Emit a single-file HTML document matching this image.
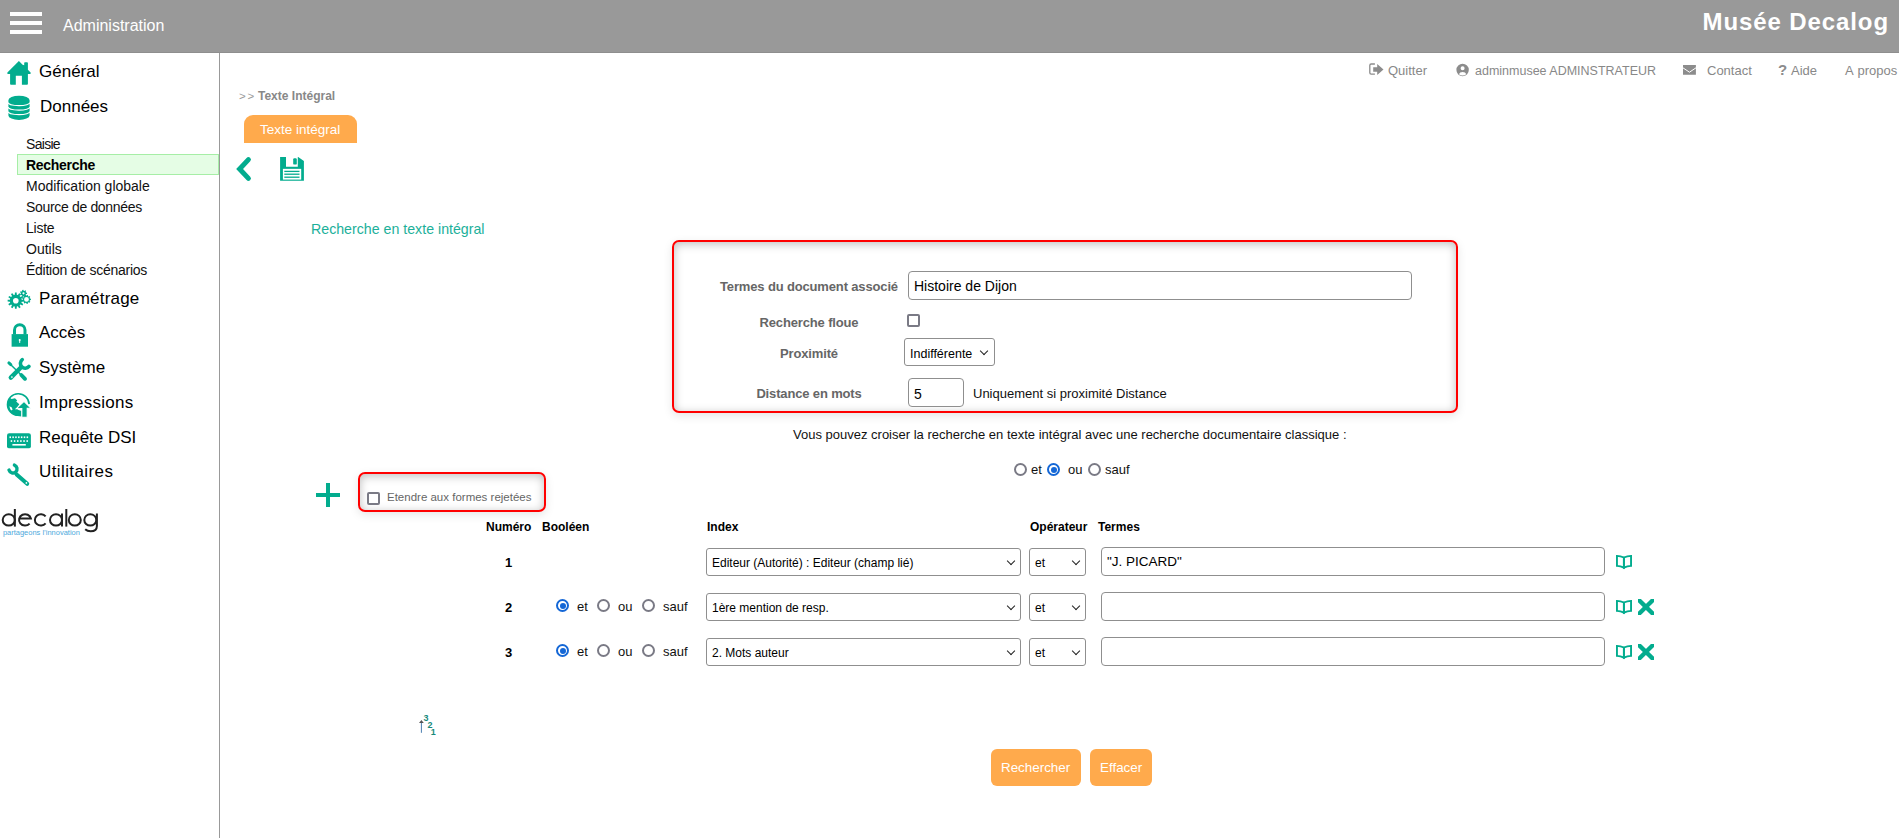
<!DOCTYPE html>
<html><head><meta charset="utf-8">
<style>
*{box-sizing:border-box}
html,body{margin:0;padding:0;width:1899px;height:838px;overflow:hidden;background:#fff;font-family:"Liberation Sans",sans-serif}
.a{position:absolute}
.t{position:absolute;white-space:nowrap;line-height:20px;height:20px}
#hdr{left:0;top:0;width:1899px;height:53px;background:#999;border-bottom:1px solid #8e8e8e}
.bar{position:absolute;left:10px;width:32px;height:4px;background:#fff}
#side{left:0;top:53px;width:220px;height:785px;border-right:1px solid #999}
.mi{color:#000;font-size:17px}
.si{color:#111;font-size:14px;left:26px}
.teal{fill:#02ac8e}
.lnk{color:#888;font-size:13px}
.lbl{color:#666;font-size:13px;font-weight:bold;letter-spacing:-0.15px}
.inp{position:absolute;border:1px solid #8f8f8f;border-radius:4px;background:#fff}
.sel{position:absolute;border:1px solid #8f8f8f;border-radius:3px;background:#fff}
.chev{position:absolute;width:6px;height:6px;border-right:1.5px solid #222;border-bottom:1.5px solid #222;transform:rotate(45deg)}
.rad{position:absolute;width:13px;height:13px;border:2px solid #7a7a85;border-radius:50%;background:#fff}
.rad.on{border:2px solid #1467d6}
.rad.on::after{content:"";position:absolute;left:1.5px;top:1.5px;width:6px;height:6px;border-radius:50%;background:#1467d6}
.cb{position:absolute;width:13px;height:13px;border:2px solid #7a7a85;border-radius:2px;background:#fff}
.txt{color:#111;font-size:13px}
.th{color:#000;font-size:12px;font-weight:bold}
.num{color:#000;font-size:13px;font-weight:bold}
.btn{position:absolute;height:37px;top:749px;background:#ffaa4c;border-radius:6px;color:#fff;font-size:13.4px}
</style></head><body>

<!-- header -->
<div id="hdr" class="a">
  <div class="bar" style="top:12px"></div>
  <div class="bar" style="top:21px"></div>
  <div class="bar" style="top:30px"></div>
</div>
<div class="t" style="left:63px;top:16px;color:#fff;font-size:16px">Administration</div>
<div class="t" style="right:10px;top:9px;color:#fff;font-size:24px;font-weight:bold;letter-spacing:0.9px;height:26px;line-height:26px">Musée Decalog</div>

<!-- sidebar -->
<div id="side" class="a"></div>
<div class="a" style="left:17px;top:154px;width:202px;height:21px;background:#e5fde5;border:1px solid #a6eea6"></div>

<div class="t mi" style="left:39px;top:62px">Général</div>
<div class="t mi" style="left:40px;top:97px">Données</div>
<div class="t si" style="top:134px;letter-spacing:-0.7px">Saisie</div>
<div class="t si" style="top:155px;font-weight:bold;color:#000;letter-spacing:-0.3px">Recherche</div>
<div class="t si" style="top:176px">Modification globale</div>
<div class="t si" style="top:197px;letter-spacing:-0.33px">Source de données</div>
<div class="t si" style="top:218px;letter-spacing:-0.25px">Liste</div>
<div class="t si" style="top:239px">Outils</div>
<div class="t si" style="top:260px;letter-spacing:-0.25px">Édition de scénarios</div>
<div class="t mi" style="left:39px;top:288.5px;letter-spacing:0.2px">Paramétrage</div>
<div class="t mi" style="left:39px;top:323px">Accès</div>
<div class="t mi" style="left:39px;top:357.5px">Système</div>
<div class="t mi" style="left:39px;top:392.5px;letter-spacing:0.25px">Impressions</div>
<div class="t mi" style="left:39px;top:427.5px">Requête DSI</div>
<div class="t mi" style="left:39px;top:462px;letter-spacing:0.4px">Utilitaires</div>

<!-- top links -->
<div class="t lnk" style="left:1388px;top:61px">Quitter</div>
<div class="t lnk" style="left:1475px;top:61px;font-size:12.5px">adminmusee ADMINSTRATEUR</div>
<div class="t lnk" style="left:1707px;top:61px">Contact</div>
<div class="t lnk" style="left:1791px;top:61px">Aide</div>
<div class="t lnk" style="left:1845px;top:61px;word-spacing:1px">A propos</div>

<!-- breadcrumb / tab -->
<div class="t" style="left:239px;top:86px;color:#999;font-size:11.5px;letter-spacing:1.8px">&gt;&gt;</div>
<div class="t" style="left:258px;top:86px;color:#888;font-size:12px;font-weight:bold">Texte Intégral</div>
<div class="a" style="left:244px;top:115px;width:113px;height:28px;background:#ffaa4c;border-radius:9px 9px 0 0"></div>
<div class="t" style="left:260px;top:120px;color:#fff;font-size:13.5px">Texte intégral</div>

<div class="t" style="left:311px;top:219px;color:#1cb09a;font-size:14.2px">Recherche en texte intégral</div>

<!-- red box -->
<div class="a" style="left:672px;top:240px;width:786px;height:172.5px;border:2px solid #f00;border-radius:7px;box-shadow:inset 0 2px 10px rgba(0,0,0,.26),0 3px 10px rgba(0,0,0,.1)"></div>
<div class="t lbl" style="left:709px;width:200px;text-align:center;top:277px">Termes du document associé</div>
<div class="t lbl" style="left:709px;width:200px;text-align:center;top:313px">Recherche floue</div>
<div class="t lbl" style="left:709px;width:200px;text-align:center;top:344px">Proximité</div>
<div class="t lbl" style="left:709px;width:200px;text-align:center;top:384px">Distance en mots</div>
<div class="inp" style="left:908px;top:271px;width:504px;height:29px"></div>
<div class="t" style="left:914px;top:276px;color:#000;font-size:14px">Histoire de Dijon</div>
<div class="cb" style="left:907px;top:314px"></div>
<div class="sel" style="left:904px;top:338px;width:91px;height:28px"></div>
<div class="t" style="left:910px;top:344px;color:#000;font-size:12.5px">Indifférente</div>
<div class="chev" style="left:981px;top:348px"></div>
<div class="inp" style="left:908px;top:378px;width:56px;height:29px"></div>
<div class="t" style="left:914px;top:384px;color:#000;font-size:14px">5</div>
<div class="t txt" style="left:973px;top:384px">Uniquement si proximité Distance</div>

<div class="t txt" style="left:793px;top:425px">Vous pouvez croiser la recherche en texte intégral avec une recherche documentaire classique :</div>
<div class="rad" style="left:1014px;top:463px"></div>
<div class="t txt" style="left:1031px;top:460px">et</div>
<div class="rad on" style="left:1047px;top:463px"></div>
<div class="t txt" style="left:1068px;top:460px">ou</div>
<div class="rad" style="left:1088px;top:463px"></div>
<div class="t txt" style="left:1105px;top:460px">sauf</div>

<!-- plus + small red box -->
<div class="a" style="left:316px;top:493px;width:24px;height:4px;background:#02ac8e"></div>
<div class="a" style="left:326px;top:483px;width:4px;height:24px;background:#02ac8e"></div>
<div class="a" style="left:358px;top:472px;width:188px;height:40px;border:2px solid #f00;border-radius:7px;box-shadow:inset 0 2px 10px rgba(0,0,0,.26),0 3px 10px rgba(0,0,0,.1)"></div>
<div class="cb" style="left:367px;top:491.5px"></div>
<div class="t" style="left:387px;top:487px;color:#666;font-size:11.5px">Etendre aux formes rejetées</div>

<!-- table -->
<div class="t th" style="left:486px;top:517px">Numéro</div>
<div class="t th" style="left:542px;top:517px">Booléen</div>
<div class="t th" style="left:707px;top:517px">Index</div>
<div class="t th" style="left:1030px;top:517px">Opérateur</div>
<div class="t th" style="left:1098px;top:517px">Termes</div>

<div class="t num" style="left:505px;top:553px">1</div>
<div class="t num" style="left:505px;top:598px">2</div>
<div class="t num" style="left:505px;top:643px">3</div>

<div class="rad on" style="left:556px;top:599px"></div>
<div class="t txt" style="left:577px;top:597px">et</div>
<div class="rad" style="left:597px;top:599px"></div>
<div class="t txt" style="left:618px;top:597px">ou</div>
<div class="rad" style="left:642px;top:599px"></div>
<div class="t txt" style="left:663px;top:597px">sauf</div>
<div class="rad on" style="left:556px;top:644px"></div>
<div class="t txt" style="left:577px;top:642px">et</div>
<div class="rad" style="left:597px;top:644px"></div>
<div class="t txt" style="left:618px;top:642px">ou</div>
<div class="rad" style="left:642px;top:644px"></div>
<div class="t txt" style="left:663px;top:642px">sauf</div>

<div class="sel" style="left:706px;top:548px;width:315px;height:28px"></div>
<div class="t" style="left:712px;top:553px;color:#000;font-size:12px">Editeur (Autorité) : Editeur (champ lié)</div>
<div class="chev" style="left:1008px;top:558px"></div>
<div class="sel" style="left:706px;top:593px;width:315px;height:28px"></div>
<div class="t" style="left:712px;top:598px;color:#000;font-size:12px">1ère mention de resp.</div>
<div class="chev" style="left:1008px;top:603px"></div>
<div class="sel" style="left:706px;top:638px;width:315px;height:28px"></div>
<div class="t" style="left:712px;top:643px;color:#000;font-size:12px">2. Mots auteur</div>
<div class="chev" style="left:1008px;top:648px"></div>

<div class="sel" style="left:1029px;top:548px;width:57px;height:28px"></div>
<div class="t" style="left:1035px;top:553px;color:#000;font-size:12px">et</div>
<div class="chev" style="left:1073px;top:558px"></div>
<div class="sel" style="left:1029px;top:593px;width:57px;height:28px"></div>
<div class="t" style="left:1035px;top:598px;color:#000;font-size:12px">et</div>
<div class="chev" style="left:1073px;top:603px"></div>
<div class="sel" style="left:1029px;top:638px;width:57px;height:28px"></div>
<div class="t" style="left:1035px;top:643px;color:#000;font-size:12px">et</div>
<div class="chev" style="left:1073px;top:648px"></div>

<div class="inp" style="left:1101px;top:547px;width:504px;height:29px"></div>
<div class="t" style="left:1107px;top:552px;color:#000;font-size:13.5px">"J. PICARD"</div>
<div class="inp" style="left:1101px;top:592px;width:504px;height:29px"></div>
<div class="inp" style="left:1101px;top:637px;width:504px;height:29px"></div>

<!-- buttons -->
<div class="btn" style="left:991px;width:90px"><div class="t" style="left:10px;top:9px">Rechercher</div></div>
<div class="btn" style="left:1090px;width:62px"><div class="t" style="left:10px;top:9px">Effacer</div></div>


<!-- sidebar icons -->
<svg class="a" style="left:4px;top:58px" width="32" height="32" viewBox="0 0 32 32"><path fill="#02ac8e" d="M14.9 3.1 L3.4 14.4 Q2.7 15.6 4 16.1 L6.1 16.1 L6.1 26 Q6.1 26.8 7 26.8 L11.8 26.8 L11.8 17.8 L17.9 17.8 L17.9 26.8 L23 26.8 Q23.9 26.8 23.9 26 L23.9 16.1 L26 16.1 Q27.3 15.6 26.6 14.4 L23.9 11.7 L23.9 5.1 Q23.9 4.3 23 4.3 L21 4.3 Q20.2 4.3 20.2 5.1 L20.2 7.2 L18.6 6.7 Z"/></svg>
<svg class="a" style="left:4px;top:92px" width="32" height="32" viewBox="0 0 32 32"><path fill="#02ac8e" d="M4.4 8.2 A10.6 4.4 0 0 1 25.6 8.2 L25.6 23.5 A10.6 4.4 0 0 1 4.4 23.5 Z"/><g fill="none" stroke="#fff" stroke-width="1.1"><path d="M4 10.6 A11 3 0 0 0 26 10.6"/><path d="M4 15.1 A11 3 0 0 0 26 15.1"/><path d="M4 19.6 A11 3 0 0 0 26 19.6"/></g></svg>
<svg class="a" style="left:4px;top:286px" width="32" height="32" viewBox="0 0 32 32"><g fill="#02ac8e" fill-rule="evenodd"><path d="M19.96 13.84 L19.96 15.56 L17.72 15.70 L17.42 16.79 L19.29 18.04 L18.43 19.52 L16.42 18.52 L15.62 19.32 L16.62 21.33 L15.14 22.19 L13.89 20.32 L12.80 20.62 L12.66 22.86 L10.94 22.86 L10.80 20.62 L9.71 20.32 L8.46 22.19 L6.98 21.33 L7.98 19.32 L7.18 18.52 L5.17 19.52 L4.31 18.04 L6.18 16.79 L5.88 15.70 L3.64 15.56 L3.64 13.84 L5.88 13.70 L6.18 12.61 L4.31 11.36 L5.17 9.88 L7.18 10.88 L7.98 10.08 L6.98 8.07 L8.46 7.21 L9.71 9.08 L10.80 8.78 L10.94 6.54 L12.66 6.54 L12.80 8.78 L13.89 9.08 L15.14 7.21 L16.62 8.07 L15.62 10.08 L16.42 10.88 L18.43 9.88 L19.29 11.36 L17.42 12.61 L17.72 13.70 Z M9.00 14.70 a2.80 2.80 0 1 0 5.60 0 a2.80 2.80 0 1 0 -5.60 0 Z"/><path d="M26.96 12.77 L26.96 14.03 L25.91 14.18 L25.61 15.00 L26.32 15.78 L25.51 16.74 L24.62 16.19 L23.86 16.63 L23.89 17.68 L22.66 17.90 L22.33 16.90 L21.47 16.74 L20.81 17.57 L19.73 16.95 L20.12 15.97 L19.56 15.30 L18.53 15.51 L18.10 14.34 L19.03 13.84 L19.03 12.96 L18.10 12.46 L18.53 11.29 L19.56 11.50 L20.12 10.83 L19.73 9.85 L20.81 9.23 L21.47 10.06 L22.33 9.90 L22.66 8.90 L23.89 9.12 L23.86 10.17 L24.62 10.61 L25.51 10.06 L26.32 11.02 L25.61 11.80 L25.91 12.62 Z M20.10 13.40 a2.40 2.40 0 1 0 4.80 0 a2.40 2.40 0 1 0 -4.80 0 Z"/><path d="M23.04 6.66 L23.04 7.94 L21.99 8.04 L21.63 8.79 L22.21 9.67 L21.21 10.47 L20.48 9.71 L19.66 9.89 L19.34 10.90 L18.09 10.61 L18.23 9.57 L17.57 9.05 L16.59 9.42 L16.03 8.26 L16.93 7.72 L16.93 6.88 L16.03 6.34 L16.59 5.18 L17.57 5.55 L18.23 5.03 L18.09 3.99 L19.34 3.70 L19.66 4.71 L20.48 4.89 L21.21 4.13 L22.21 4.93 L21.63 5.81 L21.99 6.56 Z M18.40 7.30 a1.10 1.10 0 1 0 2.20 0 a1.10 1.10 0 1 0 -2.20 0 Z"/></g></svg>
<svg class="a" style="left:4px;top:319px" width="32" height="32" viewBox="0 0 32 32"><path d="M10.5 15.5 L10.5 11 A5.25 5.25 0 0 1 21 11 L21 15.5" fill="none" stroke="#02ac8e" stroke-width="3"/><rect x="7.6" y="15.1" width="16.4" height="12.6" fill="#02ac8e"/><circle cx="15.7" cy="20.9" r="1" fill="#fff"/><rect x="15.2" y="20.9" width="1" height="3" fill="#fff"/></svg>
<svg class="a" style="left:4px;top:354px" width="32" height="32" viewBox="0 0 32 32"><g stroke="#02ac8e" stroke-linecap="round" fill="none"><line x1="4.9" y1="8.9" x2="6.8" y2="10.6" stroke-width="3"/><line x1="5.5" y1="9.5" x2="16" y2="19.8" stroke-width="1.5"/><line x1="17.3" y1="21" x2="21" y2="24.8" stroke-width="3.9"/><line x1="6.8" y1="23.6" x2="16.6" y2="13.8" stroke-width="4.4"/><path d="M24.98 12.36 A4.8 4.8 0 1 1 18.25 5.62" stroke-width="3.6"/></g><circle cx="7.9" cy="23" r="0.85" fill="#fff"/></svg>
<svg class="a" style="left:4px;top:389px" width="32" height="32" viewBox="0 0 32 32"><path d="M25.1 15.1 A10.8 10.8 0 1 0 14.3 26.3" fill="none" stroke="#02ac8e" stroke-width="1.6"/><path fill="#02ac8e" d="M3.5 15 Q3.8 11 6 9 L7.6 10.1 L11 9.2 L13.2 11.5 L12.2 12.6 L15.3 15.3 L12.6 19.5 L14.5 21 L17.5 22 L17.5 27.5 Q9 27.5 5 21 Q3.3 18 3.5 15 Z"/><path fill="#fff" d="M5.4 17.2 L7.6 18.2 L8.6 20.4 L7.2 21.6 Q5.8 19.5 5.4 17.2 Z"/><path fill="#02ac8e" stroke="#fff" stroke-width="1.1" d="M20 12.4 L27.2 19.3 L23.2 19.3 L23.2 28.2 L17.8 28.2 L17.8 19.5 L12.3 19.7 Z"/></svg>
<svg class="a" style="left:4px;top:424px" width="32" height="32" viewBox="0 0 32 32"><rect x="3" y="9.35" width="23.9" height="15" rx="2.2" fill="#02ac8e"/><g fill="#fff"><rect x="5.5" y="12.4" width="1.5" height="1.7"/><rect x="8.35" y="12.4" width="1.5" height="1.7"/><rect x="11.2" y="12.4" width="1.5" height="1.7"/><rect x="14.05" y="12.4" width="1.5" height="1.7"/><rect x="16.9" y="12.4" width="1.5" height="1.7"/><rect x="19.75" y="12.4" width="1.5" height="1.7"/><rect x="22.6" y="12.4" width="1.5" height="1.7"/><rect x="6.7" y="16.2" width="1.5" height="1.7"/><rect x="9.85" y="16.2" width="1.5" height="1.7"/><rect x="13" y="16.2" width="1.5" height="1.7"/><rect x="16.15" y="16.2" width="1.5" height="1.7"/><rect x="19.3" y="16.2" width="1.5" height="1.7"/><rect x="22.45" y="16.2" width="1.5" height="1.7"/><rect x="8.4" y="20" width="13.4" height="1.6"/></g></svg>
<svg class="a" style="left:4px;top:459px" width="32" height="32" viewBox="0 0 32 32"><g stroke="#02ac8e" stroke-linecap="round" fill="none"><line x1="12.6" y1="15.4" x2="23.2" y2="24.8" stroke-width="4"/><path d="M10.4 6.1 A4.1 4.1 0 1 1 5 11.1" stroke-width="3.4"/></g><circle cx="22.4" cy="23.9" r="0.85" fill="#fff"/></svg>

<!-- decalog logo -->
<svg class="a" style="left:0;top:500px" width="110" height="40" viewBox="0 0 110 40"><g fill="none" stroke="#222" stroke-width="2"><ellipse cx="8.75" cy="19.9" rx="6.05" ry="5.7"/><line x1="14.85" y1="9" x2="14.85" y2="26.6"/><path d="M19 18.6 H30.9 A6 5.7 0 1 0 29.6 23.6"/><path d="M45.6 16.4 A6 5.7 0 1 0 45.6 23.4"/><ellipse cx="56" cy="19.9" rx="6" ry="5.7"/><line x1="62" y1="13.6" x2="62" y2="26.6"/><line x1="66.3" y1="9" x2="66.3" y2="26.6"/><ellipse cx="74.8" cy="19.9" rx="6" ry="5.7"/><ellipse cx="90.3" cy="19.9" rx="6" ry="5.7"/><path d="M96.9 13.6 V26 Q96.9 31.3 90.6 31.3 Q87.3 31.3 85.2 29.3"/></g><text x="2.9" y="35.2" font-family="Liberation Sans" font-size="7" fill="#4ea9dc" textLength="77" lengthAdjust="spacingAndGlyphs">partageons l’innovation</text></svg>

<!-- top link icons -->
<svg class="a" style="left:1364px;top:58px" width="28" height="24" viewBox="0 0 28 24"><path d="M10.9 6 H7.2 Q5.8 6 5.8 7.4 V14.8 Q5.8 16.2 7.2 16.2 H10.9" fill="none" stroke="#8c8c8c" stroke-width="1.3"/><path fill="#8c8c8c" d="M9.2 9.2 H13.2 V5.9 L19.5 11.4 L13.2 16.9 V13.7 H9.2 Z"/></svg>
<svg class="a" style="left:1450px;top:58px" width="28" height="24" viewBox="0 0 28 24"><path fill="#8c8c8c" fill-rule="evenodd" d="M6.4 12 A6.2 6.2 0 1 0 18.8 12 A6.2 6.2 0 1 0 6.4 12 Z M10.6 10.3 A2 2 0 1 0 14.6 10.3 A2 2 0 1 0 10.6 10.3 Z M8.9 16.2 Q12.6 18.6 16.3 16.2 Q15.5 14 12.6 14 Q9.7 14 8.9 16.2 Z"/></svg>
<svg class="a" style="left:1678px;top:58px" width="28" height="24" viewBox="0 0 28 24"><rect x="5" y="7" width="12.9" height="9.75" fill="#8c8c8c"/><path d="M4.6 9.6 L11.45 14.2 L18.3 9.6" fill="none" stroke="#fff" stroke-width="1"/></svg>
<div class="t" style="left:1778px;top:60px;color:#8c8c8c;font-size:15px;font-weight:bold">?</div>

<!-- back + save -->
<svg class="a" style="left:230px;top:152px" width="80" height="34" viewBox="0 0 80 34"><polyline points="18.4,7.6 9.6,17 18.4,26.4" fill="none" stroke="#02ac8e" stroke-width="5" stroke-linecap="round" stroke-linejoin="miter"/><path fill="#02ac8e" d="M50.1 5 H56 V14.7 H67.8 V5 H68.2 L73.9 9.1 V28.85 H50.1 Z"/><rect x="63.2" y="6.3" width="3.6" height="6.3" rx="1.2" fill="#02ac8e"/><rect x="52.9" y="16.85" width="18.3" height="10.75" fill="#fff"/><g stroke="#02ac8e" stroke-width="1.3"><line x1="54.3" y1="19.4" x2="69.5" y2="19.4"/><line x1="54.3" y1="22.2" x2="69.5" y2="22.2"/><line x1="54.3" y1="25.2" x2="69.5" y2="25.2"/></g></svg>

<!-- book + x icons -->
<svg class="a" style="left:1610px;top:549px" width="50" height="26" viewBox="0 0 50 26"><g fill="none" stroke="#02ac8e" stroke-width="1.9"><path d="M6.95 6.85 Q10.5 6.85 13.9 8.5 L13.9 18.7 Q10.5 16.9 6.95 16.9 Z"/><path d="M21.05 6.85 Q17.3 6.85 13.9 8.5 L13.9 18.7 Q17.3 16.9 21.05 16.9 Z"/></g></svg>
<svg class="a" style="left:1610px;top:594px" width="50" height="26" viewBox="0 0 50 26"><g fill="none" stroke="#02ac8e" stroke-width="1.9"><path d="M6.95 6.85 Q10.5 6.85 13.9 8.5 L13.9 18.7 Q10.5 16.9 6.95 16.9 Z"/><path d="M21.05 6.85 Q17.3 6.85 13.9 8.5 L13.9 18.7 Q17.3 16.9 21.05 16.9 Z"/></g><defs><clipPath id="cx1"><rect x="27.9" y="5" width="16.1" height="15.9"/></clipPath></defs><g clip-path="url(#cx1)" stroke="#02ac8e" stroke-width="4.3" stroke-linecap="square"><line x1="29.3" y1="6.4" x2="42.6" y2="19.5"/><line x1="42.6" y1="6.4" x2="29.3" y2="19.5"/></g></svg>
<svg class="a" style="left:1610px;top:639px" width="50" height="26" viewBox="0 0 50 26"><g fill="none" stroke="#02ac8e" stroke-width="1.9"><path d="M6.95 6.85 Q10.5 6.85 13.9 8.5 L13.9 18.7 Q10.5 16.9 6.95 16.9 Z"/><path d="M21.05 6.85 Q17.3 6.85 13.9 8.5 L13.9 18.7 Q17.3 16.9 21.05 16.9 Z"/></g><defs><clipPath id="cx2"><rect x="27.9" y="5" width="16.1" height="15.9"/></clipPath></defs><g clip-path="url(#cx2)" stroke="#02ac8e" stroke-width="4.3" stroke-linecap="square"><line x1="29.3" y1="6.4" x2="42.6" y2="19.5"/><line x1="42.6" y1="6.4" x2="29.3" y2="19.5"/></g></svg>

<!-- sort icon -->
<svg class="a" style="left:410px;top:705px" width="35" height="35" viewBox="0 0 35 35"><line x1="11.4" y1="16" x2="11.4" y2="27.8" stroke="#4a7fb0" stroke-width="1"/><path d="M9 18 L11.4 15 L13.8 18 Z" fill="#555"/><g font-family="Liberation Sans" font-weight="bold" font-size="9" fill="#178a7c"><text x="13.5" y="16.2">3</text><text x="17.4" y="23.3">2</text><text x="20.8" y="30.4">1</text></g></svg>

</body></html>
